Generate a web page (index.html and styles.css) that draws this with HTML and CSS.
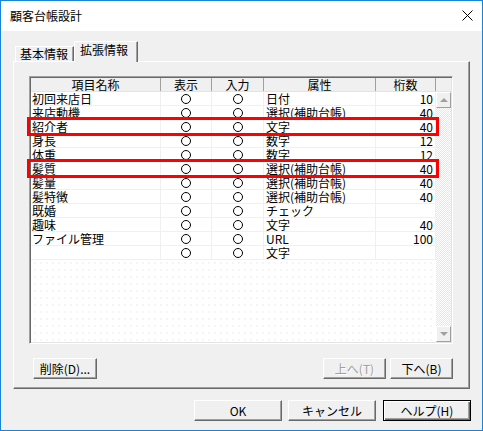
FILE: index.html
```html
<!DOCTYPE html>
<html lang="ja">
<head>
    <meta charset="UTF-8">
    <meta name="viewport" content="width=device-width, initial-scale=1.0">
    <title>顧客台帳設計</title>
    <link rel="stylesheet" href="styles.css">
</head>
<body>
    <div class="window">
        <div class="titlebar">
            <span class="title">顧客台帳設計</span>
            <svg class="close" width="11" height="11" viewBox="0 0 11 11">
                <path d="M0.5 0.5 L10.5 10.5 M10.5 0.5 L0.5 10.5" stroke="#000" stroke-width="1" fill="none"/>
            </svg>
        </div>
        <div class="client">
            <div class="tabs">
                <div class="tab">基本情報</div>
                <div class="tab active">拡張情報</div>
            </div>
            <div class="panel">
                <div class="list">
                    <div class="list-head">
                        <div class="hcell">項目名称</div>
                        <div class="hcell">表示</div>
                        <div class="hcell">入力</div>
                        <div class="hcell">属性</div>
                        <div class="hcell">桁数</div>
                        <div class="hcell filler"></div>
                    </div>
                    <div class="list-body">
                        <div class="rows">
                            <div class="row"><span class="c-name">初回来店日</span><span class="c-mark"><i class="dot"></i></span><span class="c-mark"><i class="dot"></i></span><span class="c-type">日付</span><span class="c-num">10</span></div>
                            <div class="row"><span class="c-name">来店動機</span><span class="c-mark"><i class="dot"></i></span><span class="c-mark"><i class="dot"></i></span><span class="c-type">選択(補助台帳)</span><span class="c-num">40</span></div>
                            <div class="row marked"><span class="c-name">紹介者</span><span class="c-mark"><i class="dot"></i></span><span class="c-mark"><i class="dot"></i></span><span class="c-type">文字</span><span class="c-num">40</span></div>
                            <div class="row"><span class="c-name">身長</span><span class="c-mark"><i class="dot"></i></span><span class="c-mark"><i class="dot"></i></span><span class="c-type">数字</span><span class="c-num">12</span></div>
                            <div class="row"><span class="c-name">体重</span><span class="c-mark"><i class="dot"></i></span><span class="c-mark"><i class="dot"></i></span><span class="c-type">数字</span><span class="c-num">12</span></div>
                            <div class="row marked"><span class="c-name">髪質</span><span class="c-mark"><i class="dot"></i></span><span class="c-mark"><i class="dot"></i></span><span class="c-type">選択(補助台帳)</span><span class="c-num">40</span></div>
                            <div class="row"><span class="c-name">髪量</span><span class="c-mark"><i class="dot"></i></span><span class="c-mark"><i class="dot"></i></span><span class="c-type">選択(補助台帳)</span><span class="c-num">40</span></div>
                            <div class="row"><span class="c-name">髪特徴</span><span class="c-mark"><i class="dot"></i></span><span class="c-mark"><i class="dot"></i></span><span class="c-type">選択(補助台帳)</span><span class="c-num">40</span></div>
                            <div class="row"><span class="c-name">既婚</span><span class="c-mark"><i class="dot"></i></span><span class="c-mark"><i class="dot"></i></span><span class="c-type">チェック</span><span class="c-num"></span></div>
                            <div class="row"><span class="c-name">趣味</span><span class="c-mark"><i class="dot"></i></span><span class="c-mark"><i class="dot"></i></span><span class="c-type">文字</span><span class="c-num">40</span></div>
                            <div class="row"><span class="c-name">ファイル管理</span><span class="c-mark"><i class="dot"></i></span><span class="c-mark"><i class="dot"></i></span><span class="c-type">URL</span><span class="c-num">100</span></div>
                            <div class="row"><span class="c-name"></span><span class="c-mark"><i class="dot"></i></span><span class="c-mark"><i class="dot"></i></span><span class="c-type">文字</span><span class="c-num"></span></div>
                        </div>
                        <div class="scrollbar">
                            <div class="sb-btn"><span class="arrow up"></span></div>
                            <div class="sb-track"></div>
                            <div class="sb-btn"><span class="arrow down"></span></div>
                        </div>
                    </div>
                </div>
                <div class="panel-buttons">
                    <button type="button" class="btn btn-delete">削除(D)...</button>
                    <span class="spacer"></span>
                    <button type="button" class="btn btn-up" disabled>上へ(T)</button>
                    <button type="button" class="btn btn-down">下へ(B)</button>
                </div>
            </div>
            <div class="dialog-buttons">
                <button type="button" class="btn btn-dialog">OK</button>
                <button type="button" class="btn btn-dialog">キャンセル</button>
                <button type="button" class="btn btn-dialog btn-default">ヘルプ(H)</button>
            </div>
        </div>
    </div>
</body>
</html>
```

FILE: styles.css
```css
body {
    margin: 0;
    padding: 0;
    background-color: #ffffff;
    font-family: "Noto Sans CJK JP", "Noto Sans", sans-serif;
    font-size: 12px;
    color: #000000;
}
.window {
    width: 483px;
    height: 431px;
    box-sizing: border-box;
    border: 1px solid #1883d7;
    background-color: #f0f0f0;
    display: flex;
    flex-direction: column;
}
.titlebar {
    flex: none;
    height: 30px;
    background-color: #ffffff;
    display: flex;
    align-items: center;
    justify-content: space-between;
    padding: 0 9px 0 9px;
}
.title {
    font-size: 12px;
    line-height: 14px;
}
.close {
    display: block;
    margin-top: -2px;
}
.client {
    flex: 1;
    padding: 11px 11px 0 12px;
}

/* tab strip */
.tabs {
    display: flex;
    align-items: flex-end;
    height: 19px;
    padding-left: 2px;
}
.tab {
    box-sizing: border-box;
    height: 15px;
    width: 59px;
    border-top: 1px solid #ffffff;
    border-left: 1px solid #ffffff;
    border-right: 1px solid #696969;
    box-shadow: inset -1px 0 0 #a0a0a0;
    line-height: 14px;
    padding-left: 4px;
    background-color: #f0f0f0;
}
.tab.active {
    position: relative;
    z-index: 1;
    height: 21px;
    width: 64px;
    margin-bottom: -1px;
    line-height: 16px;
    padding-left: 5px;
}

/* tab page */
.panel {
    box-sizing: border-box;
    width: 457px;
    height: 328px;
    border: 1px solid;
    border-color: #ffffff #696969 #696969 #ffffff;
    box-shadow: inset -1px -1px 0 #a0a0a0;
    padding: 14px 0 0 15px;
}
.list {
    position: relative;
    box-sizing: border-box;
    width: 424px;
    height: 268px;
    border: 1px solid;
    border-color: #a0a0a0 #ffffff #ffffff #a0a0a0;
    box-shadow: inset 1px 1px 0 #696969, inset -1px -1px 0 #e3e3e3;
    padding: 1px;
    background-color: #ffffff;
    display: flex;
    flex-direction: column;
}
.list-head {
    flex: none;
    box-sizing: border-box;
    height: 14px;
    display: grid;
    grid-template-columns: 130px 51px 52px 112px 60px 15px;
    background-color: #f0f0f0;
    border-bottom: 1px solid #e3e3e3;
}
.hcell {
    box-sizing: border-box;
    height: 13px;
    line-height: 13px;
    text-align: center;
    border-right: 1px solid #a0a0a0;
}
.hcell.filler {
    border-right: none;
}
.list-body {
    flex: 1;
    display: flex;
    min-height: 0;
}
.rows {
    width: 405px;
    background-color: #ffffff;
    background-image: radial-gradient(circle at 1px 1px, #e8e8e8 0.6px, transparent 0.8px);
    background-size: 6px 7px;
    background-position: 3px 2px;
}
.row {
    height: 14px;
    display: grid;
    grid-template-columns: 130px 51px 52px 112px 60px;
    background-color: #ffffff;
    background-image: linear-gradient(to top, #f0f0f0 1px, transparent 1px);
    line-height: 14px;
}
.row > span {
    box-sizing: border-box;
    border-right: 1px solid #f0f0f0;
    white-space: nowrap;
}
.row.marked {
    position: relative;
}
.row.marked::after {
    content: "";
    position: absolute;
    left: -4px;
    right: -3px;
    top: -3px;
    bottom: -2px;
    border: 3px solid #ff0000;
}
.c-name {
    padding-left: 1px;
}
.c-mark {
    display: flex;
    align-items: center;
    justify-content: center;
}
.c-type {
    padding-left: 2px;
}
.c-num {
    text-align: right;
    padding-right: 2px;
}
.dot {
    display: block;
    box-sizing: border-box;
    width: 10px;
    height: 10px;
    border: 1px solid #000000;
    border-radius: 50%;
}

/* vertical scroll bar */
.scrollbar {
    width: 15px;
    display: flex;
    flex-direction: column;
}
.sb-btn {
    box-sizing: border-box;
    height: 16px;
    background-color: #f0f0f0;
    border: 1px solid;
    border-color: #ffffff #a0a0a0 #a0a0a0 #ffffff;
    display: flex;
    align-items: center;
    justify-content: center;
}
.sb-track {
    flex: 1;
    background-image: conic-gradient(#e6e6e6 25%, #ffffff 0 50%, #e6e6e6 0 75%, #ffffff 0);
    background-size: 2px 2px;
}
.arrow {
    width: 0;
    height: 0;
    border-left: 4px solid transparent;
    border-right: 4px solid transparent;
}
.arrow.up {
    border-bottom: 4px solid #a0a0a0;
}
.arrow.down {
    border-top: 4px solid #a0a0a0;
}

/* buttons */
.btn {
    box-sizing: border-box;
    height: 21px;
    margin: 0;
    padding: 0;
    background-color: #f0f0f0;
    border: 1px solid;
    border-color: #ffffff #696969 #696969 #ffffff;
    box-shadow: inset -1px -1px 0 #a0a0a0;
    font-family: "Noto Sans CJK JP", "Noto Sans", sans-serif;
    font-size: 12px;
    line-height: 18px;
    color: #000000;
    border-radius: 0;
}
.btn:disabled {
    color: #a0a0a0;
    text-shadow: 1px 1px 0 #ffffff;
}
.panel-buttons {
    display: flex;
    width: 420px;
    margin-top: 14px;
    padding-left: 4px;
}
.spacer {
    flex: 1;
}
.btn-delete {
    width: 64px;
}
.btn-up {
    width: 63px;
    margin-right: 4px;
}
.btn-down {
    width: 63px;
}
.dialog-buttons {
    display: flex;
    justify-content: flex-end;
    margin-top: 11px;
    gap: 6px;
}
.btn-dialog {
    width: 88px;
}
.btn-default {
    margin-left: 1px;
    border-color: #000000;
    box-shadow: inset 1px 1px 0 #ffffff, inset -1px -1px 0 #696969, inset -2px -2px 0 #a0a0a0;
}
```
